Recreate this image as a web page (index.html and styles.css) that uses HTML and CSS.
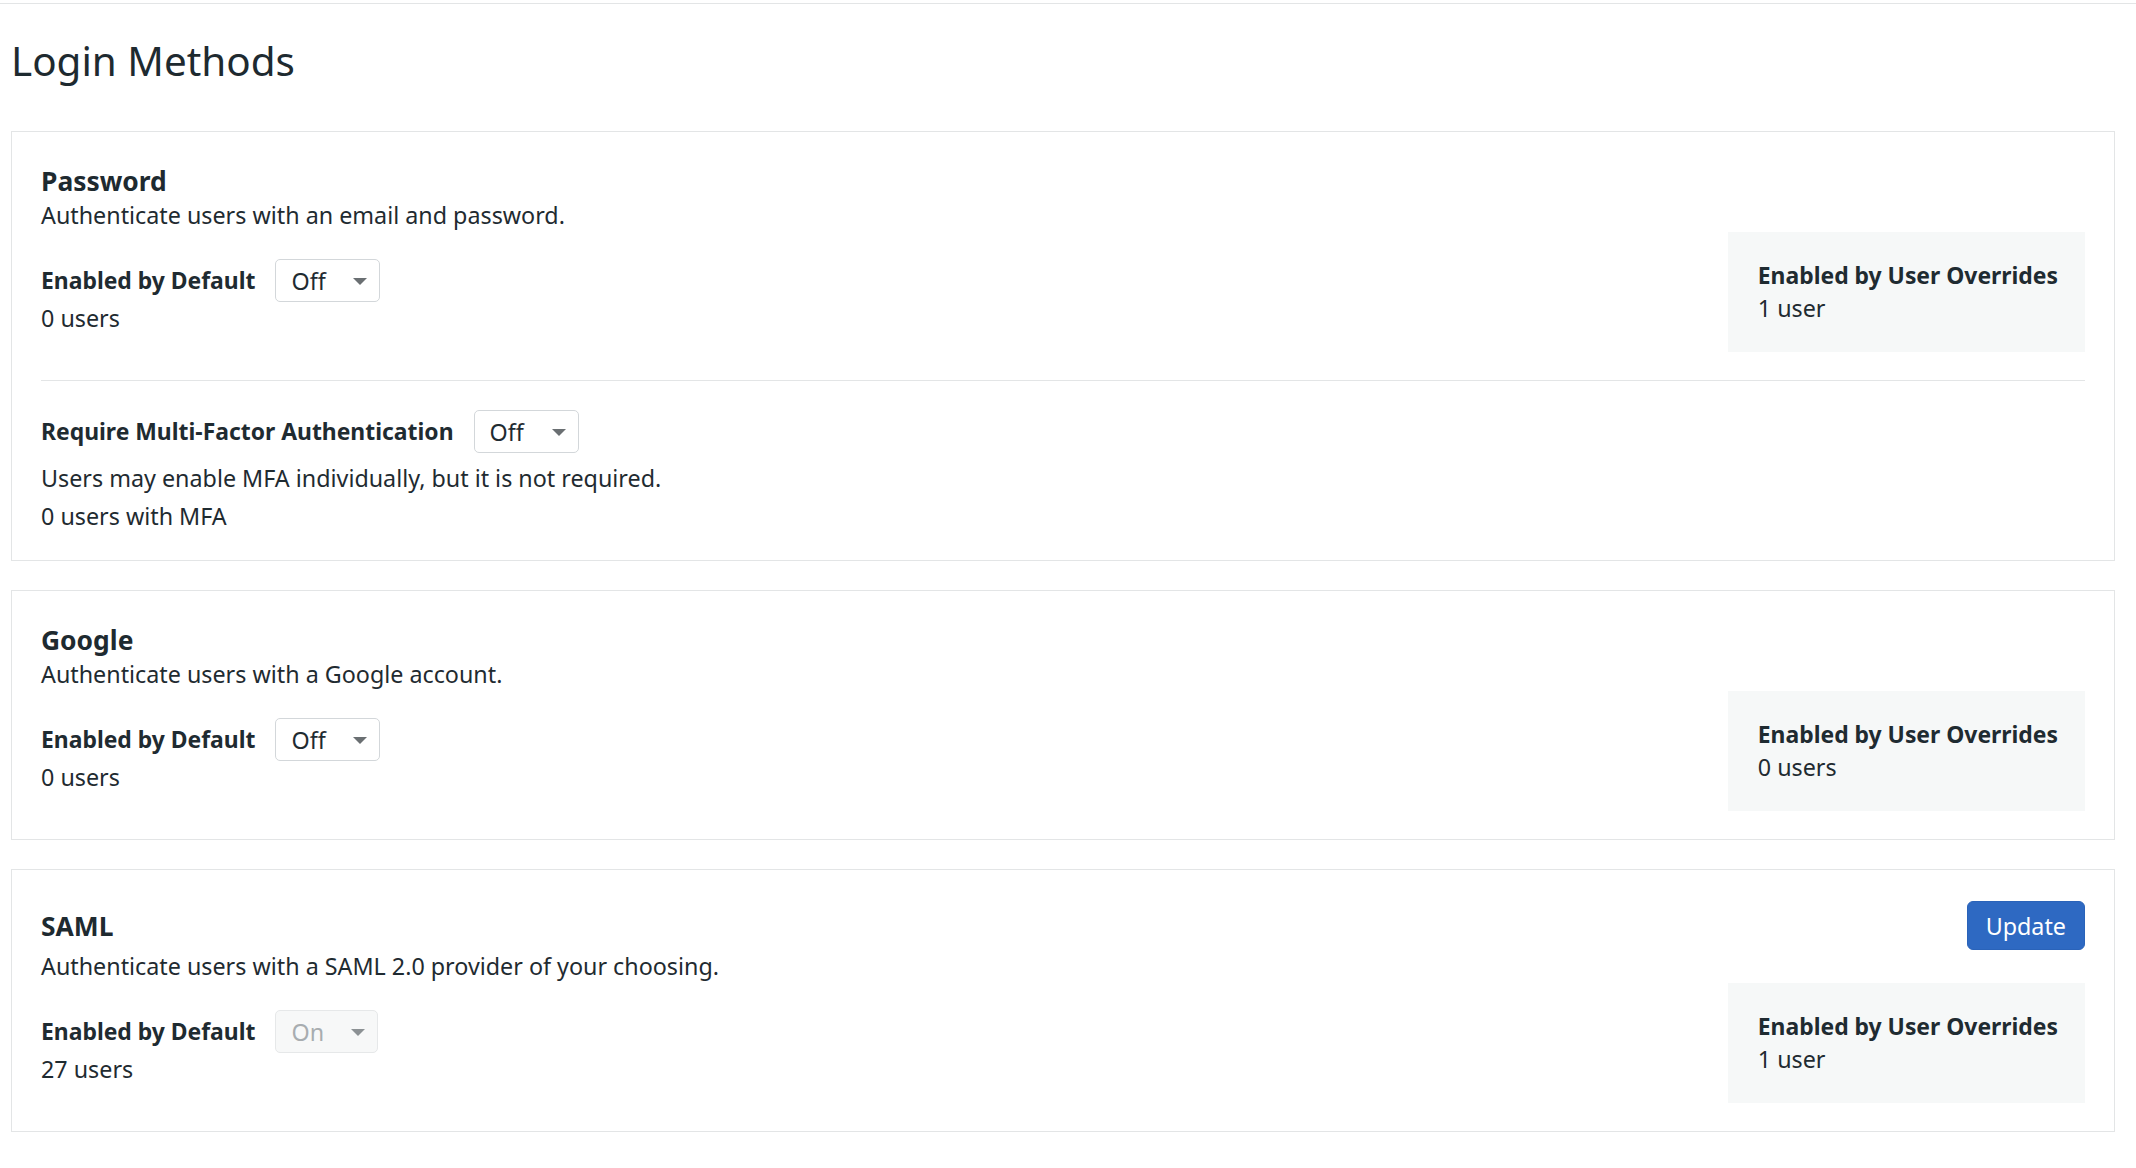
FILE: index.html
```html
<!DOCTYPE html>
<html lang="en">
<head>
<meta charset="utf-8">
<title>Login Methods</title>
<link rel="stylesheet" href="styles.css">
</head>
<body>
<div class="topbar"></div>
<main class="page">
  <h1 class="page-title">Login Methods</h1>

  <section class="card">
    <div class="card-head"><h2 class="card-title">Password</h2></div>
    <p class="desc">Authenticate users with an email and password.</p>
    <div class="card-body">
      <div class="setting">
        <div class="setting-row">
          <span class="label">Enabled by Default</span>
          <div class="select"><span>Off</span><span class="caret"></span></div>
        </div>
        <p class="count">0 users</p>
      </div>
      <div class="overrides">
        <div class="ov-title">Enabled by User Overrides</div>
        <div class="ov-count">1 user</div>
      </div>
    </div>
    <hr class="divider">
    <div class="mfa">
      <div class="setting-row">
        <span class="label">Require Multi-Factor Authentication</span>
        <div class="select"><span>Off</span><span class="caret"></span></div>
      </div>
      <p class="mfa-note">Users may enable MFA individually, but it is not required.</p>
      <p class="mfa-count">0 users with MFA</p>
    </div>
  </section>

  <section class="card">
    <div class="card-head"><h2 class="card-title">Google</h2></div>
    <p class="desc">Authenticate users with a Google account.</p>
    <div class="card-body">
      <div class="setting">
        <div class="setting-row">
          <span class="label">Enabled by Default</span>
          <div class="select"><span>Off</span><span class="caret"></span></div>
        </div>
        <p class="count">0 users</p>
      </div>
      <div class="overrides">
        <div class="ov-title">Enabled by User Overrides</div>
        <div class="ov-count">0 users</div>
      </div>
    </div>
  </section>

  <section class="card">
    <div class="card-head">
      <h2 class="card-title">SAML</h2>
      <button class="btn-primary" type="button">Update</button>
    </div>
    <p class="desc">Authenticate users with a SAML 2.0 provider of your choosing.</p>
    <div class="card-body">
      <div class="setting">
        <div class="setting-row">
          <span class="label">Enabled by Default</span>
          <div class="select select-disabled"><span>On</span><span class="caret"></span></div>
        </div>
        <p class="count">27 users</p>
      </div>
      <div class="overrides">
        <div class="ov-title">Enabled by User Overrides</div>
        <div class="ov-count">1 user</div>
      </div>
    </div>
  </section>
</main>
</body>
</html>
```

FILE: styles.css
```css
* { box-sizing: border-box; }

html, body {
  margin: 0;
  padding: 0;
  background: #ffffff;
}

body {
  font-family: "Noto Sans", "Open Sans", "DejaVu Sans", sans-serif;
  color: #1f2b31;
  font-size: 23.3px;
  line-height: 32px;
}

.topbar {
  height: 4px;
  border-bottom: 1px solid #e3e5e6;
}

.page {
  padding: 0 21px 40px 11px;
}

.page-title {
  margin: 33px 0 46px 0;
  font-size: 40.4px;
  line-height: 48px;
  font-weight: 400;
  color: #1e2a30;
}

.card {
  border: 1px solid #e3e5e6;
  padding: 31px 29px 28px 29px;
  margin-bottom: 29px;
  background: #fff;
}

.card-head {
  display: flex;
  align-items: center;
  justify-content: space-between;
  min-height: 36px;
}

.card-title {
  margin: 0;
  font-size: 26.4px;
  line-height: 36px;
  font-weight: 700;
  color: #1e2a30;
}

.desc {
  margin: 0;
  line-height: 33px;
}

.card-body {
  display: flex;
  justify-content: space-between;
  align-items: flex-start;
}

.setting {
  padding-top: 27px;
}

.setting-row {
  display: flex;
  align-items: center;
  gap: 20px;
}

.label {
  font-weight: 700;
  font-size: 22.9px;
}

.select {
  width: 105px;
  height: 43px;
  border: 1px solid #d3d7da;
  border-radius: 5px;
  display: flex;
  align-items: center;
  justify-content: space-between;
  padding: 0 12px 0 15px;
  background: #fff;
  color: #1f2b31;
}

.caret {
  width: 0;
  height: 0;
  border-left: 7px solid transparent;
  border-right: 7px solid transparent;
  border-top: 7px solid #6a6f72;
  margin-top: 2px;
}

.select-disabled {
  width: 103px;
  background: #f7f8f8;
  border-color: #e6e8e9;
  color: #a8adb0;
}

.select-disabled .caret {
  border-top-color: #8c9194;
}

.count {
  margin: 0;
  line-height: 32px;
}

.overrides {
  background: #f6f8f8;
  padding: 28px 27px 28px 30px;
}

.ov-title {
  font-weight: 700;
  font-size: 22.9px;
}

.divider {
  border: 0;
  border-top: 1px solid #e3e5e6;
  margin: 28px 0 29px 0;
}

.mfa-note {
  margin: 9px 0 0 0;
}

.mfa-count {
  margin: 6px 0 0 0;
}

.btn-primary {
  font-family: inherit;
  font-size: 23.3px;
  line-height: 32px;
  height: 49px;
  padding: 0 18px;
  border: 1px solid #2a63b9;
  border-radius: 6px;
  background: #2e69c2;
  color: #ffffff;
  cursor: pointer;
}
```
